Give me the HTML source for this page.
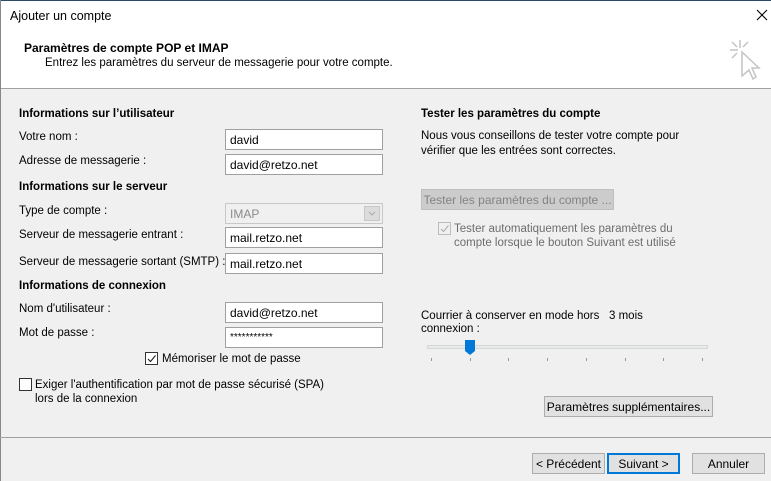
<!DOCTYPE html>
<html><head><meta charset="utf-8"><style>
*{margin:0;padding:0;box-sizing:border-box}
body{width:771px;height:481px;position:relative;overflow:hidden;background:#f0f0f0;font-family:"Liberation Sans",sans-serif;font-size:11.5px;color:#000}
.a{position:absolute;white-space:nowrap}
.b{font-weight:bold}
.in{position:absolute;background:#fff;border:1px solid #a0a0a0;height:21px;left:225px;width:158px;padding:3px 0 0 4px;font-size:12px}
.btn{position:absolute;background:#e1e1e1;border:1px solid #adadad;height:21px;text-align:center;padding-top:3px;font-size:12px}
.t{position:absolute;top:358px;width:1px;height:3px;background:#999}
</style></head><body>
<div class="a" style="left:0;top:0;width:771px;height:89px;background:#fff;border-bottom:1px solid #a0a0a0"></div>
<div class="a" style="left:0;top:0;width:771px;height:1px;background:#2b4a6a"></div>
<div class="a" style="left:0;top:0;width:1px;height:481px;background:#888"></div>
<div class="a" style="left:10px;top:9px;font-size:12.5px">Ajouter un compte</div>
<svg class="a" style="left:756px;top:9px" width="12" height="12"><path d="M1 1L11 11M11 1L1 11" stroke="#000" stroke-width="1.1"/></svg>
<div class="a b" style="left:24px;top:41px;font-size:12px">Paramètres de compte POP et IMAP</div>
<div class="a" style="left:45px;top:57px">Entrez les paramètres du serveur de messagerie pour votre compte.</div>
<svg class="a" style="left:728px;top:38px" width="36" height="48"><g stroke="#c4c4c4" stroke-width="1.5" fill="none"><path d="M12 2V10M2 12H10M4 4L9 9M20 4L15 9M4 20L9 15"/><path d="M14 14L31 30L24 30L28 39L25 41L21 32L14 38Z" fill="#fff"/></g></svg>

<div class="a b" style="left:19px;top:108px">Informations sur l’utilisateur</div>
<div class="a" style="left:19px;top:131px">Votre nom :</div>
<div class="in" style="top:129px">david</div>
<div class="a" style="left:19px;top:155px">Adresse de messagerie :</div>
<div class="in" style="top:154px">david@retzo.net</div>
<div class="a b" style="left:19px;top:181px">Informations sur le serveur</div>
<div class="a" style="left:19px;top:205px">Type de compte :</div>
<div class="in" style="top:203px;background:#f0f0f0;border-color:#c8c8c8;color:#8a8a8a">IMAP<div style="position:absolute;right:2px;top:2px;width:16px;height:15px;background:#dcdcdc;border:1px solid #c8c8c8"><svg width="14" height="13"><path d="M4 5L7 8L10 5" stroke="#aaa" fill="none"/></svg></div></div>
<div class="a" style="left:19px;top:229px">Serveur de messagerie entrant :</div>
<div class="in" style="top:227px">mail.retzo.net</div>
<div class="a" style="left:19px;top:256px">Serveur de messagerie sortant (SMTP) :</div>
<div class="in" style="top:253px">mail.retzo.net</div>
<div class="a b" style="left:19px;top:280px">Informations de connexion</div>
<div class="a" style="left:19px;top:303px">Nom d'utilisateur :</div>
<div class="in" style="top:302px">david@retzo.net</div>
<div class="a" style="left:19px;top:327px">Mot de passe :</div>
<div class="in" style="top:327px;font-size:10px;padding-top:4px">***********</div>
<div class="a" style="left:145px;top:352px;width:13px;height:13px;border:1px solid #333;background:#fff"><svg width="11" height="11" style="position:absolute;left:0;top:0"><path d="M2 6L4.5 8.5L9.5 2.5" stroke="#222" fill="none" stroke-width="1.1"/></svg></div>
<div class="a" style="left:162px;top:353px">Mémoriser le mot de passe</div>
<div class="a" style="left:19px;top:378px;width:13px;height:13px;border:1px solid #333;background:#fff"></div>
<div class="a" style="left:35px;top:378px;line-height:14px">Exiger l'authentification par mot de passe sécurisé (SPA)<br>lors de la connexion</div>

<div class="a b" style="left:421px;top:108px">Tester les paramètres du compte</div>
<div class="a" style="left:421px;top:129px;line-height:15px">Nous vous conseillons de tester votre compte pour<br>vérifier que les entrées sont correctes.</div>
<div class="btn" style="left:421px;top:189px;width:193px;background:#cccccc;border-color:#bfbfbf;color:#838383">Tester les paramètres du compte ...</div>
<div class="a" style="left:438px;top:222px;width:13px;height:13px;border:1px solid #bcbcbc"><svg width="11" height="11" style="position:absolute;left:0;top:0"><path d="M2 6L4.5 8.5L9.5 2.5" stroke="#aaa" fill="none"/></svg></div>
<div class="a" style="left:454px;top:222px;line-height:14px;color:#6d6d6d">Tester automatiquement les paramètres du<br>compte lorsque le bouton Suivant est utilisé</div>
<div class="a" style="left:421px;top:310px">Courrier à conserver en mode hors</div>
<div class="a" style="left:609px;top:310px">3 mois</div>
<div class="a" style="left:421px;top:323px">connexion :</div>
<div class="a" style="left:427px;top:345px;width:281px;height:4px;background:#e7eaea;border:1px solid #d6d6d6"></div>
<svg class="a" style="left:465px;top:340px" width="10" height="16"><path d="M0 0H10V11L5 15L0 11Z" fill="#0078d7"/></svg>
<div class="t" style="left:431px"></div><div class="t" style="left:470px"></div><div class="t" style="left:508px"></div><div class="t" style="left:547px"></div><div class="t" style="left:586px"></div><div class="t" style="left:625px"></div><div class="t" style="left:663px"></div><div class="t" style="left:702px"></div>
<div class="btn" style="left:544px;top:396px;width:169px">Paramètres supplémentaires...</div>

<div class="a" style="left:0;top:437px;width:771px;height:1px;background:#a0a0a0"></div>
<div class="btn" style="left:532px;top:453px;width:73px">&lt; Précédent</div>
<div class="btn" style="left:607px;top:453px;width:73px;border:2px solid #0078d7;padding-top:2px">Suivant &gt;</div>
<div class="btn" style="left:692px;top:453px;width:73px">Annuler</div>
</body></html>
